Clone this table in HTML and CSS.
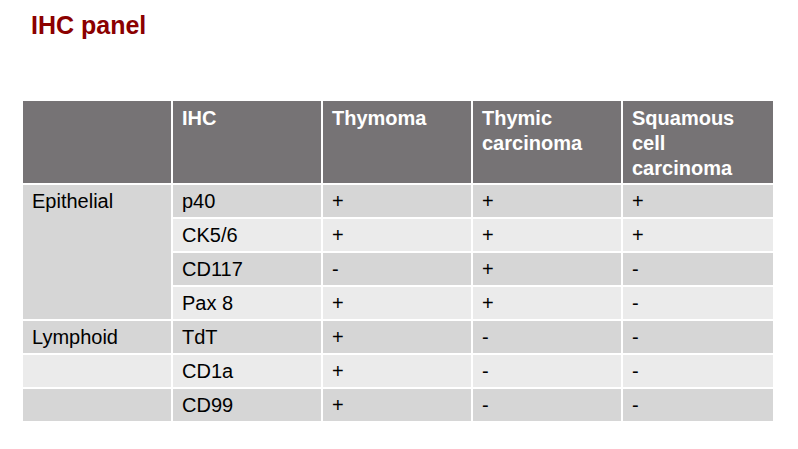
FILE: index.html
```html
<!DOCTYPE html>
<html lang="en">
<head>
<meta charset="utf-8">
<title>IHC panel</title>
<link rel="stylesheet" href="styles.css">
</head>
<body>
<h1 class="title">IHC panel</h1>
<div class="ihc-table">
  <div class="cell head"></div>
  <div class="cell head">IHC</div>
  <div class="cell head">Thymoma</div>
  <div class="cell head">Thymic<br>carcinoma</div>
  <div class="cell head">Squamous<br>cell<br>carcinoma</div>

  <div class="cell dark group-epi">Epithelial</div>
  <div class="cell dark">p40</div><div class="cell dark">+</div><div class="cell dark">+</div><div class="cell dark">+</div>
  <div class="cell light">CK5/6</div><div class="cell light">+</div><div class="cell light">+</div><div class="cell light">+</div>
  <div class="cell dark">CD117</div><div class="cell dark">-</div><div class="cell dark">+</div><div class="cell dark">-</div>
  <div class="cell light">Pax 8</div><div class="cell light">+</div><div class="cell light">+</div><div class="cell light">-</div>

  <div class="cell dark">Lymphoid</div>
  <div class="cell dark">TdT</div><div class="cell dark">+</div><div class="cell dark">-</div><div class="cell dark">-</div>
  <div class="cell light"></div>
  <div class="cell light">CD1a</div><div class="cell light">+</div><div class="cell light">-</div><div class="cell light">-</div>
  <div class="cell dark"></div>
  <div class="cell dark">CD99</div><div class="cell dark">+</div><div class="cell dark">-</div><div class="cell dark">-</div>
</div>
</body>
</html>
```

FILE: styles.css
```css
html, body {
  margin: 0;
  padding: 0;
  background: #ffffff;
}
body {
  font-family: "Liberation Sans", Arial, sans-serif;
  width: 798px;
  height: 449px;
  overflow: hidden;
}
.title {
  margin: 0;
  padding: 11px 0 0 31px;
  font-size: 25px;
  line-height: 29px;
  font-weight: bold;
  color: #8b0000;
}
.ihc-table {
  margin: 61px 0 0 23px;
  display: grid;
  grid-template-columns: 148px 148px 148px 148px 150px;
  grid-template-rows: 82px repeat(7, 32px);
  gap: 2px;
  width: 750px;
}
.cell {
  padding: 0 9px;
  font-size: 20px;
  line-height: 25px;
  color: #000;
  display: flex;
  align-items: center;
}
.head {
  background: #767375;
  color: #ffffff;
  font-weight: bold;
  align-items: flex-start;
  padding-top: 5px;
}
.dark {
  background: #d6d6d6;
}
.light {
  background: #ebebeb;
}
.group-epi {
  grid-row: 2 / 6;
  align-items: flex-start;
  padding-top: 4px;
}
```
